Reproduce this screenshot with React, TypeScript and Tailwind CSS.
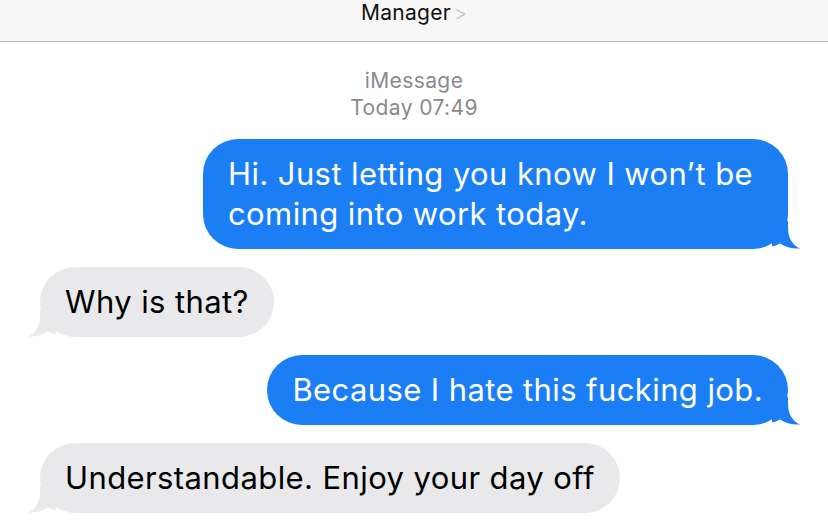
import React from "react";

const font = { fontFamily: '"Inter", "Liberation Sans", sans-serif' };

function TailRight({ color }: { color: string }) {
  return (
    <svg
      className="absolute bottom-0 right-[-12px]"
      width="28"
      height="28"
      viewBox="0 0 28 28"
    >
      <path
        d="M0 0 H16 V6 C16 16 19 23 28 27.5 C20 28 13 26 8 22.5 C5 24 3 25 0 25.5 Z"
        fill={color}
      />
    </svg>
  );
}

function TailLeft({ color }: { color: string }) {
  return (
    <svg
      className="absolute bottom-0 left-[-12px]"
      width="28"
      height="28"
      viewBox="0 0 28 28"
    >
      <path
        d="M28 0 H12 V6 C12 16 9 23 0 27.5 C8 28 15 26 20 22.5 C23 24 25 25 28 25.5 Z"
        fill={color}
      />
    </svg>
  );
}

function Sent({ children, wide }: { children: React.ReactNode; wide?: boolean }) {
  return (
    <div className="flex justify-end">
      <div
        className={
          wide
            ? "relative w-[585px] rounded-[35px] bg-[#1b7ef5] px-[25px] py-[15px] text-[31px] leading-[40px] tracking-[0.4px] text-white"
            : "relative rounded-[35px] bg-[#1b7ef5] px-[25px] py-[15px] text-[31px] leading-[40px] tracking-[0.4px] text-white"
        }
      >
        <span className="relative z-10">{children}</span>
        <TailRight color="#1b7ef5" />
      </div>
    </div>
  );
}

function Received({ children }: { children: React.ReactNode }) {
  return (
    <div className="flex justify-start">
      <div className="relative rounded-[35px] bg-[#e9e9eb] px-[25px] py-[15px] text-[31px] leading-[40px] tracking-[0.4px] text-black">
        <span className="relative z-10">{children}</span>
        <TailLeft color="#e9e9eb" />
      </div>
    </div>
  );
}

export default function App() {
  return (
    <div className="h-[522px] w-[828px] overflow-hidden bg-white" style={font}>
      <div className="flex h-[42px] items-start justify-center border-b border-[#b4b4b4] bg-[#f7f7f7] pt-[1px]">
        <span className="text-[21px] leading-[24px] tracking-[0.3px] text-[#111]">Manager</span>
        <span className="ml-[3px] text-[20px] font-light leading-[24px] text-[#c4c4c7]">&gt;</span>
      </div>
      <div className="flex flex-col items-center pt-[25px] text-[21px] leading-[27px] tracking-[0.4px] text-[#8a8a8e]">
        <span>iMessage</span>
        <span>Today 07:49</span>
      </div>
      <div className="flex flex-col gap-[18px] px-[40px] pt-[18px]">
        <Sent wide>
          Hi. Just letting you know I won’t be
          <br />
          coming into work today.
        </Sent>
        <Received>Why is that?</Received>
        <Sent>Because I hate this fucking job.</Sent>
        <Received>Understandable. Enjoy your day off</Received>
      </div>
    </div>
  );
}
